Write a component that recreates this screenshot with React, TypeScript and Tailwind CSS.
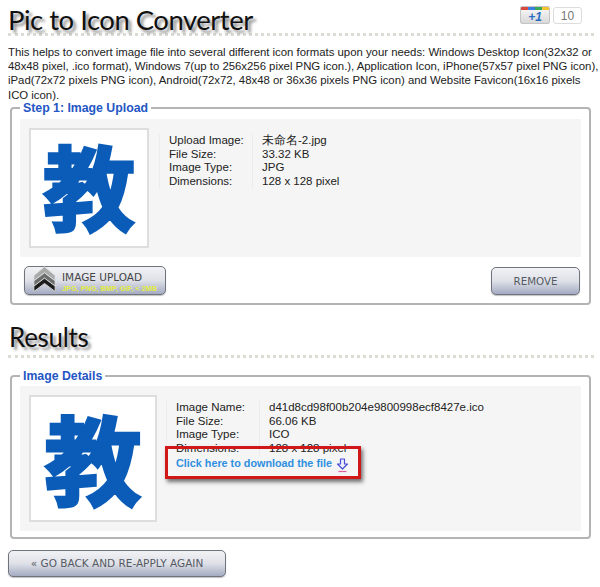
const sans = "font-['Liberation_Sans',Arial,sans-serif]";
const btnFace =
  "rounded-[5px] border border-[#6f737c] bg-gradient-to-b from-[#f1f2f5] via-[#dfe1e8] to-[#a4abc2] shadow-[0_1px_1px_rgba(0,0,0,0.25)] font-['DejaVu_Sans',sans-serif] text-[#555a63]";

function Heading({ children, className }: { children: string; className: string }) {
  return (
    <h1
      className={`font-['Lato',sans-serif] leading-none text-[#111] [text-shadow:3px_3px_3px_rgba(0,0,0,0.45)] ${className}`}
    >
      {children}
    </h1>
  );
}

function DottedRule() {
  return <div className="h-[3px] border-t-[3px] border-dotted border-[#dcdcd4]" />;
}

function IconImage({ size, glyph }: { size: string; glyph: string }) {
  return (
    <div
      className={`flex shrink-0 items-center justify-center border-2 border-[#dedede] bg-white ${size} font-['Noto_Sans_CJK_SC',sans-serif] font-bold leading-none text-[#0a5cb8] [-webkit-text-stroke:3px_#0a5cb8]`}
    >
      <span className={glyph}>教</span>
    </div>
  );
}

function InfoTable({ rows }: { rows: string[][] }) {
  return (
    <div className={`flex text-[11.500px] leading-[13.700px] text-[#222] ${sans}`}>
      <div className="w-[94px] border-r border-l border-[#ececec] pl-[9px]">
        {rows.map((r) => (
          <div key={r[0]}>{r[0]}</div>
        ))}
      </div>
      <div className="pl-[9px]">
        {rows.map((r) => (
          <div key={r[0]}>{r[1]}</div>
        ))}
      </div>
    </div>
  );
}

function Legend({ children }: { children: string }) {
  return (
    <legend className={`px-[3px] text-[12.300px] leading-[14px] font-bold text-[#2456c4] ${sans}`}>
      {children}
    </legend>
  );
}

function Chevrons() {
  return (
    <svg width="23" height="31" viewBox="0 0 26 31" className="mt-[-2px] shrink-0">
      <path d="M1 11 13 1l12 10v6L13 8 1 17z" fill="#a9abaa" stroke="#e4e4e4" />
      <path d="M1 17 13 8l12 9v6L13 14 1 23z" fill="#6c6e6d" stroke="#e4e4e4" />
      <path d="M1 23 13 14l12 9v6L13 20 1 29z" fill="#1c1c1c" stroke="#d8d8d8" />
    </svg>
  );
}

function DownloadArrow() {
  return (
    <svg width="13" height="15" viewBox="0 0 13 15" className="mt-[2px] ml-[4px] shrink-0">
      <path
        d="M4.500 1h4v5h3L6.500 11 1.500 6h3z"
        fill="#eef0ff"
        stroke="#4a4fd8"
        strokeWidth="1.200"
        strokeLinejoin="round"
      />
      <path d="M2.500 13.500h8" stroke="#e0609a" strokeWidth="1.200" />
    </svg>
  );
}

function PlusOne() {
  return (
    <div className="flex items-start">
      <div className="relative h-[18px] w-[30px] overflow-hidden rounded-[2px] border border-[#c4c4c4] bg-gradient-to-b from-[#fafafa] to-[#d8d8d8] pt-[3px] text-center font-['Liberation_Sans',sans-serif] text-[12px] leading-[14px] font-bold text-[#2a6dc4] italic">
        <div className="absolute top-0 left-0 flex h-[3px] w-full">
          <span className="w-1/4 bg-[#d8483c]" />
          <span className="w-1/4 bg-[#3a7de0]" />
          <span className="w-1/4 bg-[#3aa757]" />
          <span className="w-1/4 bg-[#f4c430]" />
        </div>
        +1
      </div>
      <div className="mt-px ml-[3px] flex h-[17px] w-[29px] items-center justify-center rounded-[3px] border border-[#dcdcdc] text-xs text-[#777]">
        10
      </div>
    </div>
  );
}

export default function App() {
  return (
    <div className={`h-[587px] w-[600px] overflow-hidden bg-white ${sans}`}>
      <header className="pr-[6px] pl-[8px]">
        <div className="flex h-[33px] items-start justify-between pt-[6px]">
          <Heading className="text-[27.500px] tracking-[-0.5px]">Pic to Icon Converter</Heading>
          <div className="mr-[12px]">
            <PlusOne />
          </div>
        </div>
        <DottedRule />
      </header>

      <p className="mt-[9px] pl-[8px] text-[11.400px] leading-[14.200px] tracking-[-0.02px] whitespace-nowrap text-[#222]">
        This helps to convert image file into several different icon formats upon your needs: Windows Desktop Icon(32x32 or
        <br />
        48x48 pixel, .ico format), Windows 7(up to 256x256 pixel PNG icon.), Application Icon, iPhone(57x57 pixel PNG icon),
        <br />
        iPad(72x72 pixels PNG icon), Android(72x72, 48x48 or 36x36 pixels PNG icon) and Website Favicon(16x16 pixels
        <br />
        ICO icon).
      </p>

      <fieldset className="mt-[-1px] mr-[9px] ml-[10px] h-[204px] rounded-[4px] border-2 border-[#b4b4b4] px-[8px]">
        <Legend>Step 1: Image Upload</Legend>
        <div className="mt-[4px] flex h-[138px] gap-[10px] bg-[#f5f5f5] px-[9px] pt-[9px]">
          <IconImage size="h-[120px] w-[120px]" glyph="mb-[8px] text-[92px]" />
          <div className="pt-[6px]">
            <InfoTable
              rows={[
                ["Upload Image:", "未命名-2.jpg"],
                ["File Size:", "33.32 KB"],
                ["Image Type:", "JPG"],
                ["Dimensions:", "128 x 128 pixel"],
              ]}
            />
          </div>
        </div>
        <div className="mt-[9px] flex items-start justify-between pr-px pl-[4px]">
          <button className={`flex h-[29px] w-[142px] items-center gap-[6px] pl-[8px] text-left whitespace-nowrap ${btnFace}`}>
            <Chevrons />
            <span className="mt-[3px] block">
              <span className="block text-[10.500px] leading-[13px] text-[#444]">IMAGE UPLOAD</span>
              <span className={`block text-[7.300px] leading-[9px] font-bold text-[#e4ee40] ${sans}`}>
                JPG, PNG, BMP, GIF, &lt; 2MB
              </span>
            </span>
          </button>
          <button className={`mt-px h-[28px] w-[89px] pt-[2px] text-[10.300px] ${btnFace}`}>REMOVE</button>
        </div>
      </fieldset>

      <section className="mt-[19px] pr-[6px] pl-[8px]">
        <Heading className="pl-px text-[26px] tracking-[-0.3px]">Results</Heading>
        <div className="mt-[5px]">
          <DottedRule />
        </div>
      </section>

      <fieldset className="mt-[11px] mr-[9px] ml-[10px] h-[170px] rounded-[4px] border-2 border-[#b4b4b4] px-[8px]">
        <Legend>Image Details</Legend>
        <div className="relative mt-[3px] flex h-[145px] gap-[9px] bg-[#f5f5f5] px-[9px] pt-[9px]">
          <IconImage size="h-[127px] w-[128px]" glyph="mb-[5px] text-[97px]" />
          <div className="pt-[6px]">
            <InfoTable
              rows={[
                ["Image Name:", "d41d8cd98f00b204e9800998ecf8427e.ico"],
                ["File Size:", "66.06 KB"],
                ["Image Type:", "ICO"],
                ["Dimensions:", "128 x 128 pixel"],
              ]}
            />
            <a className="ml-[10px] flex text-[10.800px] leading-[14px] font-bold text-[#2f8fe0]">
              Click here to download the file
              <DownloadArrow />
            </a>
          </div>
          <div className="absolute top-[60px] left-[145px] h-[33px] w-[196px] border-[3px] border-[#d01818] shadow-[2px_3px_4px_rgba(0,0,0,0.55)]" />
        </div>
      </fieldset>

      <button className={`mt-[11px] ml-[8px] block h-[27px] w-[218px] pt-[2px] text-[10.500px] ${btnFace}`}>
        « GO BACK AND RE-APPLY AGAIN
      </button>
    </div>
  );
}
